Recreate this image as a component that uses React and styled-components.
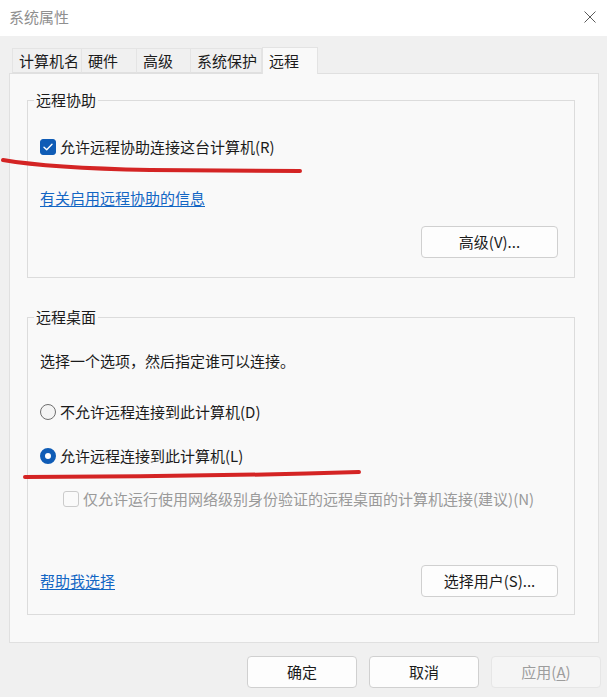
import React from "react";
import styled, { createGlobalStyle } from "styled-components";

const tabs = [
  { id: "name", title: "计算机名", w: 70 },
  { id: "hw", title: "硬件", w: 55 },
  { id: "adv", title: "高级", w: 54 },
  { id: "prot", title: "系统保护", w: 71 },
  { id: "remote", title: "远程", w: 56, active: true },
];

function Check({ checked, disabled }) {
  return (
    <CheckBox $checked={checked} $disabled={disabled}>
      {checked && (
        <svg width="10" height="8" viewBox="0 0 10 8">
          <path d="M1 4.2 L3.7 6.8 L9 1.2" fill="none" stroke="#fff" strokeWidth="1.4" strokeLinecap="round" strokeLinejoin="round" />
        </svg>
      )}
    </CheckBox>
  );
}

function App() {
  return (
    <Window>
      <GlobalStyle />
      <TitleBar>
        <span>系统属性</span>
        <svg width="12" height="12" viewBox="0 0 12 12">
          <path d="M0.5 0.5 L11.5 11.5 M11.5 0.5 L0.5 11.5" stroke="#5a5a5a" strokeWidth="1" />
        </svg>
      </TitleBar>

      <TabStrip>
        {tabs.map((t) => (
          <Tab key={t.id} $w={t.w} $active={t.active}>
            {t.title}
          </Tab>
        ))}
      </TabStrip>

      <Panel>
        <Group $bottom={19}>
          <Legend>远程协助</Legend>
          <Row $top={27}>
            <Check checked />
            <span>允许远程协助连接这台计算机(R)</span>
          </Row>
          <Row $top={31}>
            <Link>有关启用远程协助的信息</Link>
          </Row>
          <ButtonRow $top={18}>
            <Button>高级(V)...</Button>
          </ButtonRow>
        </Group>

        <Group $bottom={17} $gap={29}>
          <Legend>远程桌面</Legend>
          <Row $top={24}>选择一个选项，然后指定谁可以连接。</Row>
          <Row $top={31}>
            <Radio />
            <span>不允许远程连接到此计算机(D)</span>
          </Row>
          <Row $top={24}>
            <Radio $checked />
            <span>允许远程连接到此计算机(L)</span>
          </Row>
          <Row $top={23} $indent={23} $muted>
            <Check disabled />
            <span>仅允许运行使用网络级别身份验证的远程桌面的计算机连接(建议)(N)</span>
          </Row>
          <ButtonRow $top={56} $split>
            <Link>帮助我选择</Link>
            <Button>选择用户(S)...</Button>
          </ButtonRow>
        </Group>
      </Panel>

      <Footer>
        <Button $small>确定</Button>
        <Button $small>取消</Button>
        <Button $small disabled>
          应用(<u>A</u>)
        </Button>
      </Footer>

      <Marks width="607" height="697" viewBox="0 0 607 697">
        <path d="M3 160 Q 50 168 150 170 L 300 171" />
        <path d="M25 477 Q 190 477 359 472" />
      </Marks>
    </Window>
  );
}

const GlobalStyle = createGlobalStyle`
  html, body {
    margin: 0;
    padding: 0;
    background: #f0f0f0;
  }
  * {
    box-sizing: border-box;
  }
`;

const Window = styled.div`
  position: relative;
  width: 607px;
  height: 697px;
  overflow: hidden;
  background: #f0f0f0;
  font-family: "Noto Sans CJK SC", "Noto Sans", sans-serif;
  font-size: 15px;
  line-height: 20px;
  color: #1b1b1b;
  display: flex;
  flex-direction: column;

  & > * {
    flex: none;
  }
`;

const TitleBar = styled.div`
  height: 36px;
  background: #ffffff;
  display: flex;
  align-items: center;
  justify-content: space-between;
  padding: 0 11px 2px 9px;
  color: #8f8f8f;
`;

const TabStrip = styled.div`
  display: flex;
  align-items: flex-end;
  height: 26px;
  margin: 11px 0 0 12px;
`;

const Tab = styled.div`
  width: ${(p) => p.$w}px;
  height: ${(p) => (p.$active ? 27 : 25)}px;
  padding: ${(p) => (p.$active ? "3px" : "2px")} 0 0 6px;
  margin-bottom: ${(p) => (p.$active ? -1 : 0)}px;
  background: ${(p) => (p.$active ? "#f9f9f9" : "#f0f0f0")};
  border: 1px solid ${(p) => (p.$active ? "#e3e3e3" : "#e4e4e4")};
  border-bottom: ${(p) => (p.$active ? "none" : "1px solid #e0e0e0")};
  border-left-width: ${(p) => (p.$active ? 1 : 0)}px;
  white-space: nowrap;
  position: relative;
  z-index: 1;

  &:first-child {
    border-left-width: 1px;
  }
`;

const Panel = styled.div`
  margin: 0 8px 0 9px;
  height: 570px;
  border: 1px solid #e0e0e0;
  background: #f9f9f9;
  padding: 16px 23px 0 17px;
`;

const Group = styled.fieldset`
  margin: ${(p) => p.$gap || 0}px 0 0 0;
  padding: 0 16px ${(p) => p.$bottom}px 12px;
  border: 1px solid #dcdcdc;
  min-width: 0;
  display: flex;
  flex-direction: column;
`;

const Legend = styled.legend`
  margin-left: -6px;
  padding: 0 2px;
  line-height: 20px;
`;

const Row = styled.div`
  display: flex;
  align-items: center;
  gap: 4px;
  height: 20px;
  margin-top: ${(p) => p.$top}px;
  margin-left: ${(p) => p.$indent || 0}px;
  color: ${(p) => (p.$muted ? "#9a9a9a" : "inherit")};
  white-space: nowrap;
`;

const ButtonRow = styled.div`
  display: flex;
  align-items: center;
  justify-content: ${(p) => (p.$split ? "space-between" : "flex-end")};
  margin-top: ${(p) => p.$top}px;
`;

const Link = styled.span`
  color: #1366c4;
  text-decoration: underline;
  text-underline-offset: 2px;
`;

const Button = styled.button`
  width: ${(p) => (p.$small ? 110 : 137)}px;
  height: 32px;
  border-radius: 4px;
  border: 1px solid ${(p) => (p.disabled ? "#e6e6e6" : "#d0d0d0")};
  background: ${(p) => (p.disabled ? "#f5f5f5" : "#fdfdfd")};
  color: ${(p) => (p.disabled ? "#9d9d9d" : "#1b1b1b")};
  font: inherit;
  padding: 0 0 1px;

  u {
    text-underline-offset: 2px;
  }
`;

const CheckBox = styled.span`
  width: 16px;
  height: 16px;
  flex: none;
  border-radius: 3px;
  display: flex;
  align-items: center;
  justify-content: center;
  background: ${(p) => (p.$checked ? "#0f5cb6" : "#fafafa")};
  border: 1px solid ${(p) => (p.$checked ? "#0f5cb6" : p.$disabled ? "#cbcbcb" : "#8a8a8a")};
`;

const Radio = styled.span`
  width: 16px;
  height: 16px;
  flex: none;
  border-radius: 50%;
  background: ${(p) => (p.$checked ? "#ffffff" : "#f4f4f4")};
  border: ${(p) => (p.$checked ? "5px solid #0f5cb6" : "1px solid #6f6f6f")};
`;

const Footer = styled.div`
  display: flex;
  justify-content: flex-end;
  gap: 12px;
  padding: 13px 6px 0 0;
`;

const Marks = styled.svg`
  position: absolute;
  left: 0;
  top: 0;
  pointer-events: none;

  path {
    fill: none;
    stroke: #d42424;
    stroke-width: 4;
    stroke-linecap: round;
  }
`;

export default App;
